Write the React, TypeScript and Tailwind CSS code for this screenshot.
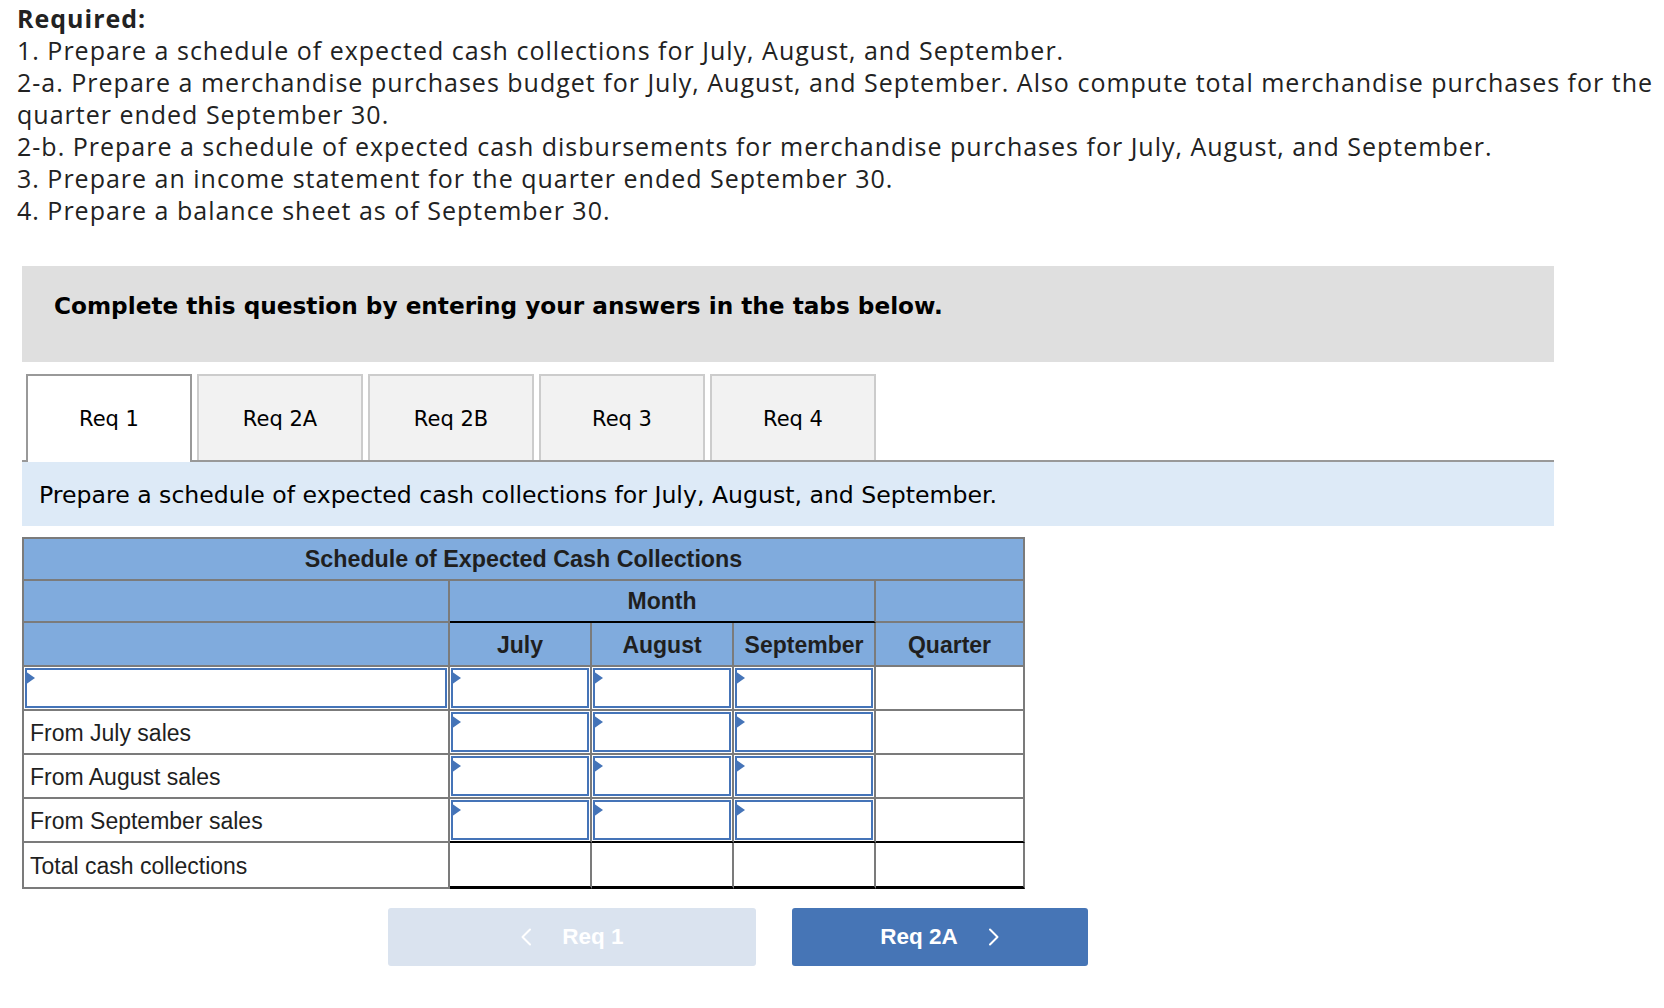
import React from "react";

const GRAY = "border-[#7b7b7b]";

function InputBox() {
  return (
    <div className="relative m-[1px] h-[40px] border-2 border-[#4574b8] bg-white">
      <svg className="absolute left-[-2px] top-[1px] z-10" width="10" height="14" viewBox="0 0 10 14">
        <polygon points="0,0 10,7 0,14" fill="#4574b8" />
      </svg>
      <input className="h-full w-full bg-transparent px-2 outline-none" aria-label="answer" />
    </div>
  );
}

function Chevron({ dir }: { dir: "left" | "right" }) {
  return (
    <svg width="12" height="18" viewBox="0 0 12 18" fill="none">
      {dir === "left" ? (
        <polyline points="10,1.5 2.5,9 10,16.5" stroke="white" strokeWidth="2" strokeLinecap="round" strokeLinejoin="round" />
      ) : (
        <polyline points="2,1.5 9.5,9 2,16.5" stroke="white" strokeWidth="2" strokeLinecap="round" strokeLinejoin="round" />
      )}
    </svg>
  );
}

const tabs = ["Req 1", "Req 2A", "Req 2B", "Req 3", "Req 4"];
const rows = ["", "From July sales", "From August sales", "From September sales"];

export default function App() {
  return (
    <div className="min-h-[1008px] w-[1664px] bg-white text-[#222]">
      {/* Required text */}
      <div className="w-[1664px] pl-[17px] pt-[2px] font-['Open_Sans',sans-serif] text-[25px] leading-[32px] tracking-[1px] text-[#222]">
        <p className="font-bold">Required:</p>
        <p>1. Prepare a schedule of expected cash collections for July, August, and September.</p>
        <p>
          2-a. Prepare a merchandise purchases budget for July, August, and September. Also compute total merchandise purchases for the quarter ended September 30.
        </p>
        <p>2-b. Prepare a schedule of expected cash disbursements for merchandise purchases for July, August, and September.</p>
        <p>3. Prepare an income statement for the quarter ended September 30.</p>
        <p>4. Prepare a balance sheet as of September 30.</p>
      </div>

      {/* Gray instruction box */}
      <div className="ml-[22px] mt-[40px] h-[96px] w-[1532px] bg-[#dfdfdf] pl-[32px] pt-[25px]">
        <p className="font-['DejaVu_Sans',sans-serif] text-[23.2px] font-bold leading-[30px] text-black">
          Complete this question by entering your answers in the tabs below.
        </p>
      </div>

      {/* Tabs */}
      <div className="ml-[22px] mt-[12px] flex w-[1532px] items-end gap-[5px] border-b-2 border-[#999] pl-[4px] font-['DejaVu_Sans',sans-serif] text-[21px] text-black">
        {tabs.map((t, i) =>
          i === 0 ? (
            <div
              key={t}
              className="relative z-10 -mb-[2px] flex h-[88px] w-[166px] items-center justify-center border-2 border-b-0 border-[#999] bg-white pt-[2px]"
            >
              {t}
            </div>
          ) : (
            <div
              key={t}
              className="flex h-[86px] w-[166px] items-center justify-center border-2 border-b-0 border-[#ccc] bg-[#f2f2f2] pt-[4px]"
            >
              {t}
            </div>
          )
        )}
      </div>

      {/* Blue prompt bar */}
      <div className="ml-[22px] flex h-[64px] w-[1532px] items-center bg-[#ddeaf7] pl-[17px] pt-[4px] font-['DejaVu_Sans',sans-serif] text-[23.6px] text-black">
        Prepare a schedule of expected cash collections for July, August, and September.
      </div>

      {/* Table */}
      <div className="ml-[22px] mt-[11px] w-[1003px] font-['Liberation_Sans',Arial,sans-serif] text-[23px] text-[#1f1f1f]">
        <div className={`flex h-[44px] items-center justify-center border-2 ${GRAY} bg-[#80abdd] pt-[1px] text-[23.3px] font-bold`}>
          Schedule of Expected Cash Collections
        </div>
        <div className="flex h-[42px]">
          <div className={`w-[428px] border-x-2 border-b-2 ${GRAY} bg-[#80abdd]`} />
          <div className={`flex w-[426px] items-center justify-center border-r-2 ${GRAY} border-b-2 border-b-black bg-[#80abdd] pt-[1px] font-bold`}>
            Month
          </div>
          <div className={`w-[149px] border-b-2 border-r-2 ${GRAY} bg-[#80abdd]`} />
        </div>
        <div className="flex h-[44px] font-bold">
          <div className={`w-[428px] border-x-2 border-b-2 ${GRAY} bg-[#80abdd]`} />
          {["July", "August", "September"].map((m) => (
            <div key={m} className={`flex w-[142px] items-center justify-center border-b-2 border-r-2 ${GRAY} bg-[#80abdd] pt-[2px]`}>
              {m}
            </div>
          ))}
          <div className={`flex w-[149px] items-center justify-center border-b-2 border-r-2 ${GRAY} bg-[#80abdd] pt-[2px]`}>Quarter</div>
        </div>
        {rows.map((label, r) => {
          const last = r === rows.length - 1;
          const bottom = last ? "border-b-black" : "";
          return (
            <div key={r} className="flex h-[44px]">
              <div className={`w-[428px] border-x-2 border-b-2 ${GRAY}`}>
                {r === 0 ? (
                  <InputBox />
                ) : (
                  <div className="flex h-full items-center pl-[6px] pt-[3px]">{label}</div>
                )}
              </div>
              {[0, 1, 2].map((c) => (
                <div key={c} className={`w-[142px] border-b-2 border-r-2 ${GRAY} ${bottom}`}>
                  <InputBox />
                </div>
              ))}
              <div className={`w-[149px] border-b-2 border-r-2 ${GRAY} ${bottom}`} />
            </div>
          );
        })}
        <div className="flex h-[46px]">
          <div className={`flex w-[428px] items-center border-x-2 border-b-2 ${GRAY} pl-[6px] pt-[2px]`}>
            Total cash collections
          </div>
          {[0, 1, 2].map((c) => (
            <div key={c} className={`w-[142px] border-r-2 ${GRAY} border-b-[3px] border-b-black`} />
          ))}
          <div className={`w-[149px] border-r-2 ${GRAY} border-b-[3px] border-b-black`} />
        </div>
      </div>

      {/* Navigation buttons */}
      <div className="mt-[19px] flex gap-[36px] pl-[388px] font-['Liberation_Sans',Arial,sans-serif] text-[22.5px] font-bold text-white">
        <button className="flex h-[58px] w-[368px] items-center justify-center gap-[30px] rounded-[3px] bg-[#dae3ef]">
          <Chevron dir="left" />
          <span>Req 1</span>
        </button>
        <button className="flex h-[58px] w-[296px] items-center justify-center gap-[30px] rounded-[3px] bg-[#4675b6]">
          <span>Req 2A</span>
          <Chevron dir="right" />
        </button>
      </div>
    </div>
  );
}
